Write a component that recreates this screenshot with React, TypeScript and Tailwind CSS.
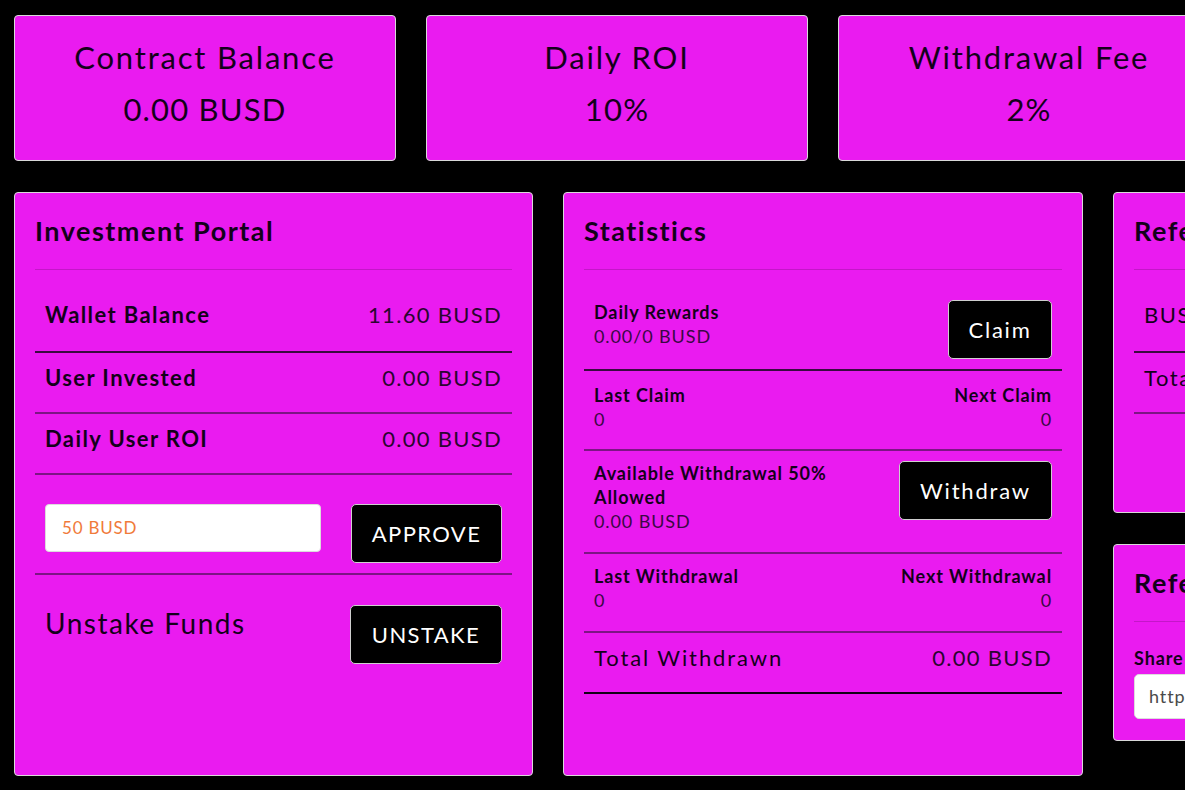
import React from "react";

const font = { fontFamily: "Lato, 'Noto Sans', sans-serif" };

function TopCard({ title, value }: { title: string; value: string }) {
  return (
    <div className="w-[382px] h-[146px] shrink-0 bg-[#ea1bf0] border border-[#d9d9d9] rounded-[4px] pt-[22px] flex flex-col items-center gap-[14px] text-[#14001a]">
      <div className="text-[31px] leading-[38px] tracking-[1.8px]">{title}</div>
      <div className="text-[31px] leading-[38px] tracking-[1.2px]">{value}</div>
    </div>
  );
}

function Btn({ children, w, upper }: { children: React.ReactNode; w: string; upper?: boolean }) {
  return (
    <button
      className={`${w} h-[59px] shrink-0 bg-black text-white border border-[#cfcfcf] rounded-[5px] text-[22px] ${upper ? "uppercase tracking-[1.4px]" : "tracking-[1.8px]"}`}
    >
      {children}
    </button>
  );
}

export default function App() {
  return (
    <div className="w-[1185px] h-[790px] overflow-hidden bg-black" style={font}>
      <div className="w-[1700px] pl-[14px] pt-[15px]">
        {/* top row */}
        <div className="flex gap-[30px]">
          <TopCard title="Contract Balance" value="0.00 BUSD" />
          <TopCard title="Daily ROI" value="10%" />
          <TopCard title="Withdrawal Fee" value="2%" />
        </div>

        {/* second row */}
        <div className="flex gap-[30px] mt-[31px] items-start">
          {/* Investment Portal */}
          <div className="w-[519px] h-[584px] shrink-0 bg-[#ea1bf0] border border-[#d9d9d9] rounded-[4px] px-[20px] pt-[22px] text-[#14001a]">
            <div className="text-[27px] leading-[32px] font-bold tracking-[1.5px]">Investment Portal</div>
            <div className="mt-[22px] h-px bg-[#c416c8]" />
            <div className="flex justify-between px-[10px] pt-[32px] pb-[23px] text-[22px] leading-[26px]">
              <span className="font-bold tracking-[1.4px]">Wallet Balance</span>
              <span className="text-[#2a0530] tracking-[1.3px]">11.60 BUSD</span>
            </div>
            <div className="h-[2px] bg-[#3a0a40]" />
            <div className="flex justify-between px-[10px] pt-[12px] pb-[21px] text-[22px] leading-[26px]">
              <span className="font-bold tracking-[1.4px]">User Invested</span>
              <span className="text-[#2a0530] tracking-[1.3px]">0.00 BUSD</span>
            </div>
            <div className="h-[2px] bg-[#7d1585]" />
            <div className="flex justify-between px-[10px] pt-[12px] pb-[21px] text-[22px] leading-[26px]">
              <span className="font-bold tracking-[1.4px]">Daily User ROI</span>
              <span className="text-[#2a0530] tracking-[1.3px]">0.00 BUSD</span>
            </div>
            <div className="h-[2px] bg-[#7d1585]" />
            <div className="flex justify-between items-start px-[10px] pt-[29px] pb-[10px]">
              <div className="w-[276px] h-[48px] bg-white border border-[#dcdcdc] rounded-[4px] flex items-center px-[16px] text-[17px] tracking-[0.8px] text-[#f07a3a]">
                50 BUSD
              </div>
              <Btn w="w-[151px]" upper>
                Approve
              </Btn>
            </div>
            <div className="h-[2px] bg-[#7d1585]" />
            <div className="flex justify-between items-start px-[10px] pt-[30px]">
              <span className="text-[28px] leading-[36px] tracking-[1.5px]">Unstake Funds</span>
              <Btn w="w-[152px]" upper>
                Unstake
              </Btn>
            </div>
          </div>

          {/* Statistics */}
          <div className="w-[520px] h-[584px] shrink-0 bg-[#ea1bf0] border border-[#d9d9d9] rounded-[4px] px-[20px] pt-[22px] text-[#14001a]">
            <div className="text-[27px] leading-[32px] font-bold tracking-[1.5px]">Statistics</div>
            <div className="mt-[22px] h-px bg-[#c416c8]" />
            <div className="flex justify-between items-start px-[10px] pt-[30px] pb-[10px] text-[18px] leading-[24px] tracking-[0.9px]">
              <div>
                <div className="font-bold">Daily Rewards</div>
                <div className="text-[#3a0845]">0.00/0 BUSD</div>
              </div>
              <Btn w="w-[104px]">Claim</Btn>
            </div>
            <div className="h-[2px] bg-[#3a0a40]" />
            <div className="flex justify-between px-[10px] pt-[12px] pb-[18px] text-[18px] leading-[24px] tracking-[0.9px]">
              <div>
                <div className="font-bold">Last Claim</div>
                <div className="text-[#3a0845]">0</div>
              </div>
              <div className="text-right">
                <div className="font-bold">Next Claim</div>
                <div className="text-[#3a0845]">0</div>
              </div>
            </div>
            <div className="h-[2px] bg-[#7d1585]" />
            <div className="flex justify-between items-start px-[10px] pt-[10px] pb-[19px] text-[18px] leading-[24px] tracking-[0.9px]">
              <div className="w-[260px]">
                <div className="font-bold">Available Withdrawal 50% Allowed</div>
                <div className="text-[#3a0845]">0.00 BUSD</div>
              </div>
              <Btn w="w-[153px]">Withdraw</Btn>
            </div>
            <div className="h-[2px] bg-[#7d1585]" />
            <div className="flex justify-between px-[10px] pt-[10px] pb-[19px] text-[18px] leading-[24px] tracking-[0.9px]">
              <div>
                <div className="font-bold">Last Withdrawal</div>
                <div className="text-[#3a0845]">0</div>
              </div>
              <div className="text-right">
                <div className="font-bold">Next Withdrawal</div>
                <div className="text-[#3a0845]">0</div>
              </div>
            </div>
            <div className="h-[2px] bg-[#7d1585]" />
            <div className="flex justify-between px-[10px] pt-[12px] pb-[21px] text-[22px] leading-[26px]">
              <span className="tracking-[1.9px]">Total Withdrawn</span>
              <span className="text-[#2a0530] tracking-[1.3px]">0.00 BUSD</span>
            </div>
            <div className="h-[2px] bg-[#120015]" />
          </div>

          {/* third column */}
          <div className="flex flex-col gap-[31px] shrink-0">
            <div className="w-[520px] h-[321px] bg-[#ea1bf0] border border-[#d9d9d9] rounded-[4px] px-[20px] pt-[22px] text-[#14001a]">
              <div className="text-[27px] leading-[32px] font-bold tracking-[1.5px]">Referral Rewards</div>
              <div className="mt-[22px] h-px bg-[#c416c8]" />
              <div className="flex justify-between px-[10px] pt-[32px] pb-[23px] text-[22px] leading-[26px]">
                <span className="tracking-[1.6px]">BUSD Referral Rewards</span>
                <span className="text-[#2a0530] tracking-[1.3px]">0.00 BUSD</span>
              </div>
              <div className="h-[2px] bg-[#3a0a40]" />
              <div className="flex justify-between px-[10px] pt-[12px] pb-[21px] text-[22px] leading-[26px]">
                <span className="tracking-[1.6px]">Total Referrals</span>
                <span className="text-[#2a0530] tracking-[1.3px]">0</span>
              </div>
              <div className="h-[2px] bg-[#7d1585]" />
            </div>
            <div className="w-[520px] h-[197px] bg-[#ea1bf0] border border-[#d9d9d9] rounded-[4px] px-[20px] pt-[22px] text-[#14001a]">
              <div className="text-[27px] leading-[32px] font-bold tracking-[1.5px]">Referral Link</div>
              <div className="mt-[22px] h-px bg-[#c416c8]" />
              <div className="pt-[24px] text-[18px] leading-[24px] font-bold tracking-[0.9px]">Share your referral link</div>
              <div className="mt-[4px] h-[45px] bg-white border border-[#dcdcdc] rounded-[5px] flex items-center px-[14px] text-[18px] tracking-[0.9px] text-[#4a4a4a]">
                https://busd-miner.app/?ref=0x0000
              </div>
            </div>
          </div>
        </div>
      </div>
    </div>
  );
}
